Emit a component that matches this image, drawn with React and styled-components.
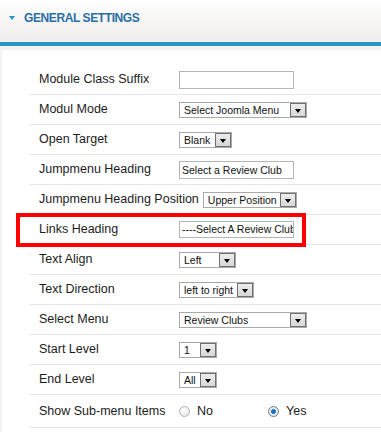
import React from 'react'
import styled, { createGlobalStyle } from 'styled-components'

const GlobalStyle = createGlobalStyle`
    html, body {
        margin: 0;
        padding: 0;
        background: #f2f2f2;
        font-family: "Liberation Sans", Arial, sans-serif;
    }
`

const Page = styled.div`
    width: 381px;
    height: 432px;
    overflow: hidden;
    background: #f2f2f2;
`

const Header = styled.div`
    box-sizing: border-box;
    height: 46px;
    display: flex;
    align-items: flex-start;
    padding: 11px 0 0 9px;
    gap: 9px;
    background: linear-gradient( to bottom, #ffffff 0%, #f6f5f4 50%, #efeeec 100% );
    border-bottom: 4px solid #2893c7;
`

const Caret = styled.span`
    width: 0;
    height: 0;
    border-left: 3.5px solid transparent;
    border-right: 3.5px solid transparent;
    border-top: 4px solid #2893c7;
    margin-top: 5px;
`

const Title = styled.h3`
    margin: 0;
    font-size: 12px;
    line-height: 14px;
    font-weight: bold;
    letter-spacing: -0.4px;
    color: #2a6ea8;
    text-transform: uppercase;
`

const Panel = styled.div`
    margin: 4px 0 0 2px;
    padding-top: 15px;
    background: #fff;
    border-radius: 2px 0 0 0;
    height: 400px;
`

const List = styled.div`
    margin-left: 27px;
`

const Row = styled.div`
    position: relative;
    display: flex;
    align-items: center;
    min-height: ${ ( { tall } ) => tall ? '32px' : '29px' };
    padding-left: 10px;
    border-bottom: 1px solid #e6e6e6;
`

const Label = styled.label`
    flex: 0 0 auto;
    min-width: 136px;
    margin-right: 4px;
    margin-top: -1px;
    font-size: 12.5px;
    color: #1c1c1c;
`

const TextInput = styled.div`
    box-sizing: border-box;
    width: ${ ( { w } ) => w }px;
    height: ${ ( { h } ) => h || 18 }px;
    border: 1px solid #b5b5b5;
    padding: 0 2px;
    font-size: 10.5px;
    line-height: ${ ( { h } ) => ( h || 18 ) - 2 }px;
    color: #111;
    white-space: nowrap;
    overflow: hidden;
    background: #fff;
`

const SelectBox = styled.div`
    box-sizing: border-box;
    display: flex;
    align-items: center;
    width: ${ ( { w } ) => w }px;
    height: 16px;
    border: 1px solid #a9a9a9;
    background: #fff;
    font-size: 10.5px;
    color: #111;
`

const SelectText = styled.span`
    flex: 1;
    padding-left: 4px;
    white-space: nowrap;
    overflow: hidden;
`

const ArrowButton = styled.span`
    box-sizing: border-box;
    width: 16px;
    height: 14px;
    display: flex;
    align-items: center;
    justify-content: center;
    padding-top: 2px;
    border: 1px solid #707070;
    background: linear-gradient( to bottom, #ececec, #d8d8d8 );

    &::after {
        content: '';
        border-left: 3.5px solid transparent;
        border-right: 3.5px solid transparent;
        border-top: 4px solid #000;
    }
`

const Highlight = styled.div`
    position: absolute;
    left: -13px;
    top: -2px;
    width: 290px;
    height: 34px;
    box-sizing: border-box;
    border: 4px solid #f00;
    pointer-events: none;
`

const RadioGroup = styled.div`
    display: flex;
    align-items: center;
`

const RadioOption = styled.span`
    display: flex;
    align-items: center;
    width: 89px;
    font-size: 12.5px;
    color: #1c1c1c;
`

const RadioDot = styled.span`
    box-sizing: border-box;
    width: 11px;
    height: 11px;
    margin-right: 7px;
    border-radius: 50%;
    border: 1px solid ${ ( { checked } ) => checked ? '#6d7f91' : '#b3b3b3' };
    background: ${ ( { checked } ) => checked
        ? 'radial-gradient( circle, #0b5fa8 0, #2c86cf 2.2px, #e9eef2 2.8px, #dfe4e8 100% )'
        : 'radial-gradient( circle at 40% 35%, #ffffff 0, #e4e4e4 100% )' };
`

function Select( { w, value } ) {
    return (
        <SelectBox w={ w }>
            <SelectText>{ value }</SelectText>
            <ArrowButton />
        </SelectBox>
    )
}

export default function App() {
    return (
        <Page>
            <GlobalStyle />
            <Header>
                <Caret />
                <Title>General Settings</Title>
            </Header>

            <Panel>
                <List>
                    <Row>
                        <Label>Module Class Suffix</Label>
                        <TextInput w={ 115 } />
                    </Row>
                    <Row>
                        <Label>Modul Mode</Label>
                        <Select w={ 128 } value="Select Joomla Menu" />
                    </Row>
                    <Row>
                        <Label>Open Target</Label>
                        <Select w={ 53 } value="Blank" />
                    </Row>
                    <Row>
                        <Label>Jumpmenu Heading</Label>
                        <TextInput w={ 115 }>Select a Review Club</TextInput>
                    </Row>
                    <Row>
                        <Label>Jumpmenu Heading Position</Label>
                        <Select w={ 94 } value="Upper Position" />
                    </Row>
                    <Row>
                        <Label>Links Heading</Label>
                        <TextInput w={ 115 } h={ 17 }>----Select A Review Club</TextInput>
                        <Highlight />
                    </Row>
                    <Row>
                        <Label>Text Align</Label>
                        <Select w={ 57 } value="Left" />
                    </Row>
                    <Row>
                        <Label>Text Direction</Label>
                        <Select w={ 75 } value="left to right" />
                    </Row>
                    <Row>
                        <Label>Select Menu</Label>
                        <Select w={ 128 } value="Review Clubs" />
                    </Row>
                    <Row>
                        <Label>Start Level</Label>
                        <Select w={ 38 } value="1" />
                    </Row>
                    <Row>
                        <Label>End Level</Label>
                        <Select w={ 38 } value="All" />
                    </Row>
                    <Row tall>
                        <Label>Show Sub-menu Items</Label>
                        <RadioGroup>
                            <RadioOption><RadioDot />No</RadioOption>
                            <RadioOption><RadioDot checked />Yes</RadioOption>
                        </RadioGroup>
                    </Row>
                </List>
            </Panel>
        </Page>
    )
}
